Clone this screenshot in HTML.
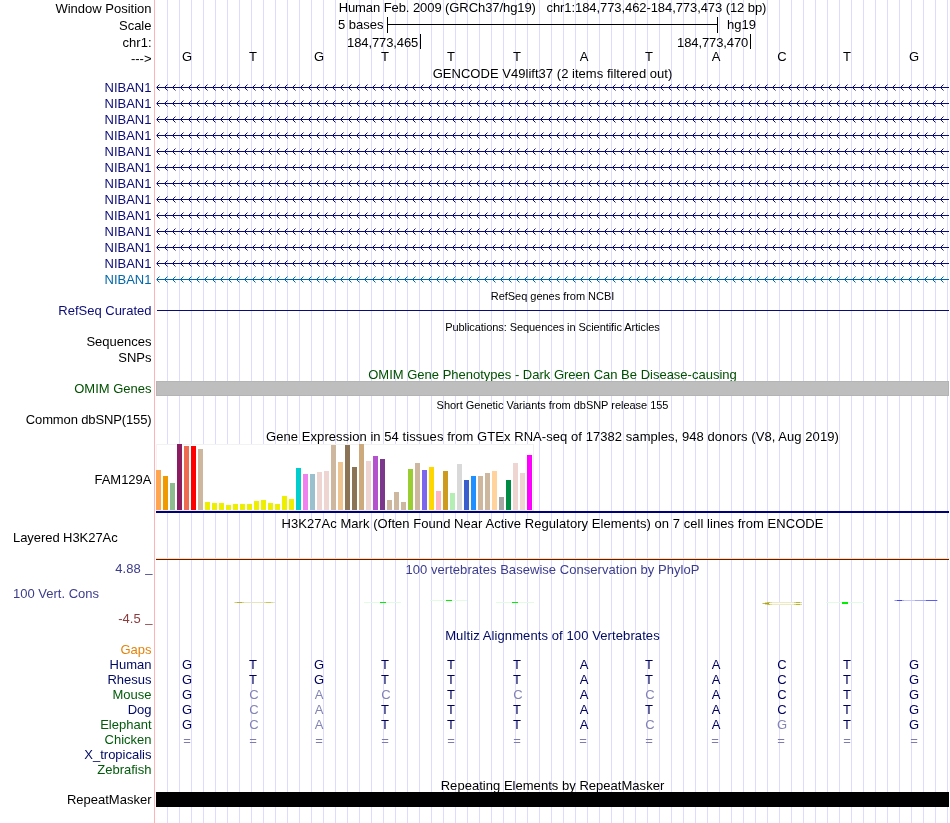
<!DOCTYPE html>
<html lang="en"><head><meta charset="utf-8"><title>UCSC Genome Browser - chr1:184,773,462-184,773,473</title>
<style>
html,body{margin:0;padding:0;background:#fff;}
body{width:950px;height:823px;position:relative;overflow:hidden;font-family:"Liberation Sans",sans-serif;font-size:13px;color:#000;}
#g{position:absolute;left:0;top:0;}
#tx{position:absolute;left:0;top:0;width:950px;height:823px;will-change:transform;}
.t{position:absolute;height:15px;line-height:15px;font-size:13px;white-space:pre;}
.s{position:absolute;height:12px;line-height:12px;font-size:11px;white-space:pre;}
.r{text-align:right;left:0;width:151.5px;}
.c{text-align:center;left:155.5px;width:794px;}
</style></head>
<body>
<svg id="g" width="950" height="823" viewBox="0 0 950 823" shape-rendering="crispEdges">
<defs>
<pattern id="gl" x="167" y="0" width="12" height="823" patternUnits="userSpaceOnUse"><rect x="0" y="0" width="1" height="823" fill="#dcdcff"/></pattern>
<pattern id="an" x="156" y="-3" width="8" height="7" patternUnits="userSpaceOnUse"><g fill="#0c0c78"><rect x="0" y="3" width="1" height="1" opacity=".55"/><rect x="1" y="2" width="1" height="3"/><rect x="2" y="1" width="1" height="1"/><rect x="2" y="5" width="1" height="1"/><rect x="3" y="0" width="1" height="1" opacity=".5"/><rect x="3" y="6" width="1" height="1" opacity=".5"/></g></pattern>
<pattern id="ab" x="156" y="-3" width="8" height="7" patternUnits="userSpaceOnUse"><g fill="#0066aa"><rect x="0" y="3" width="1" height="1" opacity=".55"/><rect x="1" y="2" width="1" height="3"/><rect x="2" y="1" width="1" height="1"/><rect x="2" y="5" width="1" height="1"/><rect x="3" y="0" width="1" height="1" opacity=".5"/><rect x="3" y="6" width="1" height="1" opacity=".5"/></g></pattern>
</defs>
<rect x="167" y="0" width="783" height="823" fill="url(#gl)"/>
<rect x="154" y="0" width="1" height="823" fill="#ffb4b4"/>
<g fill="#000">
<rect x="387" y="24" width="331" height="1"/><rect x="387" y="17" width="1" height="16"/><rect x="717" y="17" width="1" height="16"/>
<rect x="420" y="34" width="1" height="15"/><rect x="750" y="34" width="1" height="15"/>
</g>
<g transform="translate(0,87)"><rect x="157" y="0" width="792" height="1" fill="#0c0c78"/><rect x="156" y="-3" width="792" height="7" fill="url(#an)"/></g>
<g transform="translate(0,103)"><rect x="157" y="0" width="792" height="1" fill="#0c0c78"/><rect x="156" y="-3" width="792" height="7" fill="url(#an)"/></g>
<g transform="translate(0,119)"><rect x="157" y="0" width="792" height="1" fill="#0c0c78"/><rect x="156" y="-3" width="792" height="7" fill="url(#an)"/></g>
<g transform="translate(0,135)"><rect x="157" y="0" width="792" height="1" fill="#0c0c78"/><rect x="156" y="-3" width="792" height="7" fill="url(#an)"/></g>
<g transform="translate(0,151)"><rect x="157" y="0" width="792" height="1" fill="#0c0c78"/><rect x="156" y="-3" width="792" height="7" fill="url(#an)"/></g>
<g transform="translate(0,167)"><rect x="157" y="0" width="792" height="1" fill="#0c0c78"/><rect x="156" y="-3" width="792" height="7" fill="url(#an)"/></g>
<g transform="translate(0,183)"><rect x="157" y="0" width="792" height="1" fill="#0c0c78"/><rect x="156" y="-3" width="792" height="7" fill="url(#an)"/></g>
<g transform="translate(0,199)"><rect x="157" y="0" width="792" height="1" fill="#0c0c78"/><rect x="156" y="-3" width="792" height="7" fill="url(#an)"/></g>
<g transform="translate(0,215)"><rect x="157" y="0" width="792" height="1" fill="#0c0c78"/><rect x="156" y="-3" width="792" height="7" fill="url(#an)"/></g>
<g transform="translate(0,231)"><rect x="157" y="0" width="792" height="1" fill="#0c0c78"/><rect x="156" y="-3" width="792" height="7" fill="url(#an)"/></g>
<g transform="translate(0,247)"><rect x="157" y="0" width="792" height="1" fill="#0c0c78"/><rect x="156" y="-3" width="792" height="7" fill="url(#an)"/></g>
<g transform="translate(0,263)"><rect x="157" y="0" width="792" height="1" fill="#0c0c78"/><rect x="156" y="-3" width="792" height="7" fill="url(#an)"/></g>
<g transform="translate(0,279)"><rect x="157" y="0" width="792" height="1" fill="#0066aa"/><rect x="156" y="-3" width="792" height="7" fill="url(#ab)"/></g>
<rect x="157" y="310" width="792" height="1" fill="#0c0c78"/>
<rect x="156" y="381" width="793" height="15" fill="#b4b4b4"/><rect x="157" y="382" width="791" height="13" fill="#bebebe"/>
<rect x="156" y="444" width="378" height="67" fill="#fff"/>
<rect x="156" y="444" width="378" height="1" fill="#f2f2f2"/><rect x="156" y="444" width="1" height="67" fill="#f4f4f4"/><rect x="533" y="444" width="1" height="67" fill="#f0f0f0"/><rect x="156" y="510" width="378" height="1" fill="#ececec"/>
<rect x="156" y="470" width="5" height="40" fill="#FFA54F"/>
<rect x="163" y="476" width="5" height="34" fill="#EE9A00"/>
<rect x="170" y="483" width="5" height="27" fill="#8FBC8F"/>
<rect x="177" y="444" width="5" height="66" fill="#8B1C62"/>
<rect x="184" y="446" width="5" height="64" fill="#EE6A50"/>
<rect x="191" y="446" width="5" height="64" fill="#FF0000"/>
<rect x="198" y="449" width="5" height="61" fill="#CDB79E"/>
<rect x="205" y="502" width="5" height="8" fill="#EEEE00"/>
<rect x="212" y="503" width="5" height="7" fill="#EEEE00"/>
<rect x="219" y="503" width="5" height="7" fill="#EEEE00"/>
<rect x="226" y="505" width="5" height="5" fill="#EEEE00"/>
<rect x="233" y="504" width="5" height="6" fill="#EEEE00"/>
<rect x="240" y="504" width="5" height="6" fill="#EEEE00"/>
<rect x="247" y="504" width="5" height="6" fill="#EEEE00"/>
<rect x="254" y="501" width="5" height="9" fill="#EEEE00"/>
<rect x="261" y="500" width="5" height="10" fill="#EEEE00"/>
<rect x="268" y="503" width="5" height="7" fill="#EEEE00"/>
<rect x="275" y="504" width="5" height="6" fill="#EEEE00"/>
<rect x="282" y="496" width="5" height="14" fill="#EEEE00"/>
<rect x="289" y="499" width="5" height="11" fill="#EEEE00"/>
<rect x="296" y="468" width="5" height="42" fill="#00CDCD"/>
<rect x="303" y="474" width="5" height="36" fill="#EE82EE"/>
<rect x="310" y="474" width="5" height="36" fill="#9AC0CD"/>
<rect x="317" y="472" width="5" height="38" fill="#EED5D2"/>
<rect x="324" y="471" width="5" height="39" fill="#EED5D2"/>
<rect x="331" y="445" width="5" height="65" fill="#CDB79E"/>
<rect x="338" y="462" width="5" height="48" fill="#EEC591"/>
<rect x="345" y="445" width="5" height="65" fill="#8B7355"/>
<rect x="352" y="467" width="5" height="43" fill="#8B7355"/>
<rect x="359" y="444" width="5" height="66" fill="#CDAA7D"/>
<rect x="366" y="461" width="5" height="49" fill="#EED5D2"/>
<rect x="373" y="456" width="5" height="54" fill="#B452CD"/>
<rect x="380" y="459" width="5" height="51" fill="#7A378B"/>
<rect x="387" y="500" width="5" height="10" fill="#CDB79E"/>
<rect x="394" y="492" width="5" height="18" fill="#CDB79E"/>
<rect x="401" y="502" width="5" height="8" fill="#CDB79E"/>
<rect x="408" y="469" width="5" height="41" fill="#9ACD32"/>
<rect x="415" y="463" width="5" height="47" fill="#CDB79E"/>
<rect x="422" y="470" width="5" height="40" fill="#7A67EE"/>
<rect x="429" y="467" width="5" height="43" fill="#FFD700"/>
<rect x="436" y="491" width="5" height="19" fill="#FFB6C1"/>
<rect x="443" y="471" width="5" height="39" fill="#CD9B1D"/>
<rect x="450" y="493" width="5" height="17" fill="#B4EEB4"/>
<rect x="457" y="464" width="5" height="46" fill="#D9D9D9"/>
<rect x="464" y="480" width="5" height="30" fill="#3A5FCD"/>
<rect x="471" y="476" width="5" height="34" fill="#1E90FF"/>
<rect x="478" y="476" width="5" height="34" fill="#CDB79E"/>
<rect x="485" y="473" width="5" height="37" fill="#CDB79E"/>
<rect x="492" y="471" width="5" height="39" fill="#FFD39B"/>
<rect x="499" y="497" width="5" height="13" fill="#A6A6A6"/>
<rect x="506" y="480" width="5" height="30" fill="#008B45"/>
<rect x="513" y="463" width="5" height="47" fill="#EED5D2"/>
<rect x="520" y="473" width="5" height="37" fill="#EED5D2"/>
<rect x="527" y="455" width="5" height="55" fill="#FF00FF"/>
<rect x="156" y="511" width="793" height="2" fill="#00007a"/>
<rect x="156" y="558" width="793" height="1" fill="#ffe08c"/><rect x="156" y="559" width="793" height="1" fill="#6b1424"/>
<rect x="234" y="602" width="41" height="1" fill="#e6e6bc" opacity="1"/>
<rect x="235" y="602" width="2" height="1" fill="#d0cc70" opacity="1"/>
<rect x="237" y="602" width="5" height="1" fill="#b8b030" opacity="1"/>
<rect x="242" y="602" width="2" height="1" fill="#d4d080" opacity="1"/>
<rect x="264" y="602" width="2" height="1" fill="#dcd898" opacity="1"/>
<rect x="266" y="602" width="5" height="1" fill="#c8c458" opacity="1"/>
<rect x="271" y="602" width="2" height="1" fill="#dcd898" opacity="1"/>
<rect x="364" y="602" width="37" height="1" fill="#e2fbe2" opacity="1"/>
<rect x="380" y="602" width="6" height="1" fill="#00ee00" opacity="1"/>
<rect x="430" y="600" width="37" height="1" fill="#e2fbe2" opacity="1"/>
<rect x="446" y="600" width="6" height="1" fill="#00ee00" opacity="1"/>
<rect x="496" y="602" width="38" height="1" fill="#e2fbe2" opacity="1"/>
<rect x="512" y="602" width="6" height="1" fill="#00ee00" opacity="1"/>
<rect x="762" y="603" width="1" height="1" fill="#e0dca0" opacity="1"/>
<rect x="763" y="603" width="2" height="1" fill="#c0b848" opacity="1"/>
<rect x="765" y="603" width="4" height="1" fill="#aca418" opacity="1"/>
<rect x="765" y="602" width="2" height="1" fill="#e0dca4" opacity="1"/>
<rect x="767" y="602" width="3" height="1" fill="#c4bc50" opacity="1"/>
<rect x="770" y="602" width="2" height="1" fill="#dcd898" opacity="1"/>
<rect x="772" y="602" width="22" height="1" fill="#ebe9c8" opacity="1"/>
<rect x="794" y="602" width="2" height="1" fill="#d4d07c" opacity="1"/>
<rect x="796" y="602" width="4" height="1" fill="#bcb438" opacity="1"/>
<rect x="800" y="602" width="2" height="1" fill="#dcd898" opacity="1"/>
<rect x="765" y="604" width="2" height="1" fill="#e0dca4" opacity="1"/>
<rect x="767" y="604" width="3" height="1" fill="#c4bc50" opacity="1"/>
<rect x="770" y="604" width="2" height="1" fill="#dcd898" opacity="1"/>
<rect x="772" y="604" width="22" height="1" fill="#ebe9c8" opacity="1"/>
<rect x="794" y="604" width="2" height="1" fill="#d4d07c" opacity="1"/>
<rect x="796" y="604" width="4" height="1" fill="#bcb438" opacity="1"/>
<rect x="800" y="604" width="2" height="1" fill="#dcd898" opacity="1"/>
<rect x="769" y="603" width="33" height="1" fill="#fcfcf0" opacity="1"/>
<rect x="826" y="602" width="38" height="1" fill="#e2fbe2" opacity="1"/>
<rect x="842" y="602" width="6" height="2" fill="#00ee00"/>
<rect x="894" y="600" width="44" height="1" fill="#c8c8fa" opacity="1"/>
<rect x="895" y="600" width="2" height="1" fill="#9494f4" opacity="1"/>
<rect x="897" y="600" width="5" height="1" fill="#4444ee" opacity="1"/>
<rect x="902" y="600" width="2" height="1" fill="#a4a4f6" opacity="1"/>
<rect x="915" y="600" width="11" height="1" fill="#a4a4f6" opacity="1"/>
<rect x="926" y="600" width="11" height="1" fill="#5c5cf0" opacity="1"/>
<rect x="156" y="792" width="793" height="15" fill="#000"/>
</svg>
<div id="tx">
<div class="t r" style="top:1px;">Window Position</div>
<div class="t r" style="top:18px;">Scale</div>
<div class="t r" style="top:35px;">chr1:</div>
<div class="t r" style="top:51px;">---&gt;</div>
<div class="t c" style="top:0px;letter-spacing:-0.076px;">Human Feb. 2009 (GRCh37/hg19)   chr1:184,773,462-184,773,473 (12 bp)</div>
<div class="t" style="top:17px;left:338px;">5 bases</div>
<div class="t" style="top:17px;left:727px;">hg19</div>
<div class="t" style="top:35px;left:347px;letter-spacing:-0.1px;">184,773,465</div>
<div class="t" style="top:35px;left:677px;letter-spacing:-0.1px;">184,773,470</div>
<div class="t" style="top:49px;left:157px;width:60px;text-align:center;">G</div>
<div class="t" style="top:49px;left:223px;width:60px;text-align:center;">T</div>
<div class="t" style="top:49px;left:289px;width:60px;text-align:center;">G</div>
<div class="t" style="top:49px;left:355px;width:60px;text-align:center;">T</div>
<div class="t" style="top:49px;left:421px;width:60px;text-align:center;">T</div>
<div class="t" style="top:49px;left:487px;width:60px;text-align:center;">T</div>
<div class="t" style="top:49px;left:554px;width:60px;text-align:center;">A</div>
<div class="t" style="top:49px;left:619px;width:60px;text-align:center;">T</div>
<div class="t" style="top:49px;left:686px;width:60px;text-align:center;">A</div>
<div class="t" style="top:49px;left:752px;width:60px;text-align:center;">C</div>
<div class="t" style="top:49px;left:817px;width:60px;text-align:center;">T</div>
<div class="t" style="top:49px;left:884px;width:60px;text-align:center;">G</div>
<div class="t c" style="top:66px;letter-spacing:0.03px;">GENCODE V49lift37 (2 items filtered out)</div>
<div class="t r" style="top:80px;color:#0c0c78;">NIBAN1</div>
<div class="t r" style="top:96px;color:#0c0c78;">NIBAN1</div>
<div class="t r" style="top:112px;color:#0c0c78;">NIBAN1</div>
<div class="t r" style="top:128px;color:#0c0c78;">NIBAN1</div>
<div class="t r" style="top:144px;color:#0c0c78;">NIBAN1</div>
<div class="t r" style="top:160px;color:#0c0c78;">NIBAN1</div>
<div class="t r" style="top:176px;color:#0c0c78;">NIBAN1</div>
<div class="t r" style="top:192px;color:#0c0c78;">NIBAN1</div>
<div class="t r" style="top:208px;color:#0c0c78;">NIBAN1</div>
<div class="t r" style="top:224px;color:#0c0c78;">NIBAN1</div>
<div class="t r" style="top:240px;color:#0c0c78;">NIBAN1</div>
<div class="t r" style="top:256px;color:#0c0c78;">NIBAN1</div>
<div class="t r" style="top:272px;color:#0066aa;">NIBAN1</div>
<div class="s c" style="top:290px;letter-spacing:-0.03px;">RefSeq genes from NCBI</div>
<div class="t r" style="top:303px;color:#0c0c78;">RefSeq Curated</div>
<div class="s c" style="top:321px;letter-spacing:-0.067px;">Publications: Sequences in Scientific Articles</div>
<div class="t r" style="top:334px;">Sequences</div>
<div class="t r" style="top:350px;">SNPs</div>
<div class="t c" style="top:367px;color:#005000;height:14px;overflow:hidden;">OMIM Gene Phenotypes - Dark Green Can Be Disease-causing</div>
<div class="t r" style="top:381px;color:#005000;">OMIM Genes</div>
<div class="s c" style="top:399px;letter-spacing:-0.03px;">Short Genetic Variants from dbSNP release 155</div>
<div class="t r" style="top:412px;letter-spacing:-0.13px;">Common dbSNP(155)</div>
<div class="t c" style="top:429px;letter-spacing:0.061px;">Gene Expression in 54 tissues from GTEx RNA-seq of 17382 samples, 948 donors (V8, Aug 2019)</div>
<div class="t r" style="top:472px;">FAM129A</div>
<div class="t c" style="top:516px;letter-spacing:0.052px;">H3K27Ac Mark (Often Found Near Active Regulatory Elements) on 7 cell lines from ENCODE</div>
<div class="t" style="top:530px;left:13px;letter-spacing:-0.06px;">Layered H3K27Ac</div>
<div class="t r" style="top:561px;color:#3c3c8c;">4.88 <span style="position:relative;top:-1px;left:1px">_</span></div>
<div class="t c" style="top:562px;color:#3c3c8c;letter-spacing:0.043px;">100 vertebrates Basewise Conservation by PhyloP</div>
<div class="t" style="top:586px;left:13px;color:#3c3c8c;">100 Vert. Cons</div>
<div class="t r" style="top:611px;color:#8c3c3c;">-4.5 <span style="position:relative;top:-1px;left:1px">_</span></div>
<div class="t c" style="top:628px;color:#000a64;letter-spacing:0.1px;">Multiz Alignments of 100 Vertebrates</div>
<div class="t r" style="top:642px;color:#e4820a;">Gaps</div>
<div class="t r" style="top:657px;color:#000a64;">Human</div>
<div class="t r" style="top:672px;color:#000a64;">Rhesus</div>
<div class="t r" style="top:687px;color:#005a0a;">Mouse</div>
<div class="t r" style="top:702px;color:#000a64;">Dog</div>
<div class="t r" style="top:717px;color:#005a0a;">Elephant</div>
<div class="t r" style="top:732px;color:#005a0a;">Chicken</div>
<div class="t r" style="top:747px;color:#000a64;">X_tropicalis</div>
<div class="t r" style="top:762px;color:#005a0a;">Zebrafish</div>
<div class="t" style="top:657px;left:157px;width:60px;text-align:center;color:#00005c;">G</div>
<div class="t" style="top:657px;left:223px;width:60px;text-align:center;color:#00005c;">T</div>
<div class="t" style="top:657px;left:289px;width:60px;text-align:center;color:#00005c;">G</div>
<div class="t" style="top:657px;left:355px;width:60px;text-align:center;color:#00005c;">T</div>
<div class="t" style="top:657px;left:421px;width:60px;text-align:center;color:#00005c;">T</div>
<div class="t" style="top:657px;left:487px;width:60px;text-align:center;color:#00005c;">T</div>
<div class="t" style="top:657px;left:554px;width:60px;text-align:center;color:#00005c;">A</div>
<div class="t" style="top:657px;left:619px;width:60px;text-align:center;color:#00005c;">T</div>
<div class="t" style="top:657px;left:686px;width:60px;text-align:center;color:#00005c;">A</div>
<div class="t" style="top:657px;left:752px;width:60px;text-align:center;color:#00005c;">C</div>
<div class="t" style="top:657px;left:817px;width:60px;text-align:center;color:#00005c;">T</div>
<div class="t" style="top:657px;left:884px;width:60px;text-align:center;color:#00005c;">G</div>
<div class="t" style="top:672px;left:157px;width:60px;text-align:center;color:#00005c;">G</div>
<div class="t" style="top:672px;left:223px;width:60px;text-align:center;color:#00005c;">T</div>
<div class="t" style="top:672px;left:289px;width:60px;text-align:center;color:#00005c;">G</div>
<div class="t" style="top:672px;left:355px;width:60px;text-align:center;color:#00005c;">T</div>
<div class="t" style="top:672px;left:421px;width:60px;text-align:center;color:#00005c;">T</div>
<div class="t" style="top:672px;left:487px;width:60px;text-align:center;color:#00005c;">T</div>
<div class="t" style="top:672px;left:554px;width:60px;text-align:center;color:#00005c;">A</div>
<div class="t" style="top:672px;left:619px;width:60px;text-align:center;color:#00005c;">T</div>
<div class="t" style="top:672px;left:686px;width:60px;text-align:center;color:#00005c;">A</div>
<div class="t" style="top:672px;left:752px;width:60px;text-align:center;color:#00005c;">C</div>
<div class="t" style="top:672px;left:817px;width:60px;text-align:center;color:#00005c;">T</div>
<div class="t" style="top:672px;left:884px;width:60px;text-align:center;color:#00005c;">G</div>
<div class="t" style="top:687px;left:157px;width:60px;text-align:center;color:#00005c;">G</div>
<div class="t" style="top:687px;left:224px;width:60px;text-align:center;color:#8484b4;">C</div>
<div class="t" style="top:687px;left:289px;width:60px;text-align:center;color:#8484b4;">A</div>
<div class="t" style="top:687px;left:356px;width:60px;text-align:center;color:#8484b4;">C</div>
<div class="t" style="top:687px;left:421px;width:60px;text-align:center;color:#00005c;">T</div>
<div class="t" style="top:687px;left:488px;width:60px;text-align:center;color:#8484b4;">C</div>
<div class="t" style="top:687px;left:554px;width:60px;text-align:center;color:#00005c;">A</div>
<div class="t" style="top:687px;left:620px;width:60px;text-align:center;color:#8484b4;">C</div>
<div class="t" style="top:687px;left:686px;width:60px;text-align:center;color:#00005c;">A</div>
<div class="t" style="top:687px;left:752px;width:60px;text-align:center;color:#00005c;">C</div>
<div class="t" style="top:687px;left:817px;width:60px;text-align:center;color:#00005c;">T</div>
<div class="t" style="top:687px;left:884px;width:60px;text-align:center;color:#00005c;">G</div>
<div class="t" style="top:702px;left:157px;width:60px;text-align:center;color:#00005c;">G</div>
<div class="t" style="top:702px;left:224px;width:60px;text-align:center;color:#8484b4;">C</div>
<div class="t" style="top:702px;left:289px;width:60px;text-align:center;color:#8484b4;">A</div>
<div class="t" style="top:702px;left:355px;width:60px;text-align:center;color:#00005c;">T</div>
<div class="t" style="top:702px;left:421px;width:60px;text-align:center;color:#00005c;">T</div>
<div class="t" style="top:702px;left:487px;width:60px;text-align:center;color:#00005c;">T</div>
<div class="t" style="top:702px;left:554px;width:60px;text-align:center;color:#00005c;">A</div>
<div class="t" style="top:702px;left:619px;width:60px;text-align:center;color:#00005c;">T</div>
<div class="t" style="top:702px;left:686px;width:60px;text-align:center;color:#00005c;">A</div>
<div class="t" style="top:702px;left:752px;width:60px;text-align:center;color:#00005c;">C</div>
<div class="t" style="top:702px;left:817px;width:60px;text-align:center;color:#00005c;">T</div>
<div class="t" style="top:702px;left:884px;width:60px;text-align:center;color:#00005c;">G</div>
<div class="t" style="top:717px;left:157px;width:60px;text-align:center;color:#00005c;">G</div>
<div class="t" style="top:717px;left:224px;width:60px;text-align:center;color:#8484b4;">C</div>
<div class="t" style="top:717px;left:289px;width:60px;text-align:center;color:#8484b4;">A</div>
<div class="t" style="top:717px;left:355px;width:60px;text-align:center;color:#00005c;">T</div>
<div class="t" style="top:717px;left:421px;width:60px;text-align:center;color:#00005c;">T</div>
<div class="t" style="top:717px;left:487px;width:60px;text-align:center;color:#00005c;">T</div>
<div class="t" style="top:717px;left:554px;width:60px;text-align:center;color:#00005c;">A</div>
<div class="t" style="top:717px;left:620px;width:60px;text-align:center;color:#8484b4;">C</div>
<div class="t" style="top:717px;left:686px;width:60px;text-align:center;color:#00005c;">A</div>
<div class="t" style="top:717px;left:752px;width:60px;text-align:center;color:#8484b4;">G</div>
<div class="t" style="top:717px;left:817px;width:60px;text-align:center;color:#00005c;">T</div>
<div class="t" style="top:717px;left:884px;width:60px;text-align:center;color:#00005c;">G</div>
<div class="t" style="top:733px;left:157px;width:60px;text-align:center;color:#7c7cb0;">=</div>
<div class="t" style="top:733px;left:223px;width:60px;text-align:center;color:#7c7cb0;">=</div>
<div class="t" style="top:733px;left:289px;width:60px;text-align:center;color:#7c7cb0;">=</div>
<div class="t" style="top:733px;left:355px;width:60px;text-align:center;color:#7c7cb0;">=</div>
<div class="t" style="top:733px;left:421px;width:60px;text-align:center;color:#7c7cb0;">=</div>
<div class="t" style="top:733px;left:487px;width:60px;text-align:center;color:#7c7cb0;">=</div>
<div class="t" style="top:733px;left:553px;width:60px;text-align:center;color:#7c7cb0;">=</div>
<div class="t" style="top:733px;left:619px;width:60px;text-align:center;color:#7c7cb0;">=</div>
<div class="t" style="top:733px;left:685px;width:60px;text-align:center;color:#7c7cb0;">=</div>
<div class="t" style="top:733px;left:751px;width:60px;text-align:center;color:#7c7cb0;">=</div>
<div class="t" style="top:733px;left:817px;width:60px;text-align:center;color:#7c7cb0;">=</div>
<div class="t" style="top:733px;left:884px;width:60px;text-align:center;color:#7c7cb0;">=</div>
<div class="t c" style="top:778px;letter-spacing:0.03px;">Repeating Elements by RepeatMasker</div>
<div class="t r" style="top:792px;">RepeatMasker</div>
</div>
</body></html>
